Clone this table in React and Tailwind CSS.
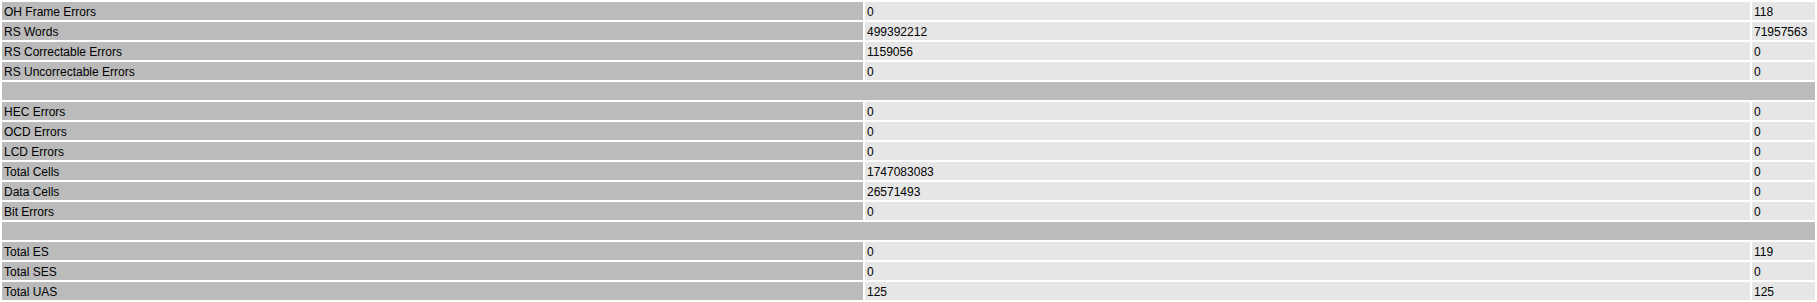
const ROWS = [
  ['OH Frame Errors', '0', '118'],
  ['RS Words', '499392212', '71957563'],
  ['RS Correctable Errors', '1159056', '0'],
  ['RS Uncorrectable Errors', '0', '0'],
  null,
  ['HEC Errors', '0', '0'],
  ['OCD Errors', '0', '0'],
  ['LCD Errors', '0', '0'],
  ['Total Cells', '1747083083', '0'],
  ['Data Cells', '26571493', '0'],
  ['Bit Errors', '0', '0'],
  null,
  ['Total ES', '0', '119'],
  ['Total SES', '0', '0'],
  ['Total UAS', '125', '125'],
]

const cell = 'h-[18px] px-[2px] pt-[3px] pb-[1px] align-top whitespace-nowrap overflow-hidden'

export default function App() {
  return (
    <div className="bg-white font-['Liberation_Sans',Arial,sans-serif] text-[12px] leading-[14px] text-black">
      <table className="w-full table-fixed border-separate border-spacing-[2px]">
        <colgroup>
          <col className="w-[861px]" />
          <col className="w-[885px]" />
          <col />
        </colgroup>
        <tbody>
          {ROWS.map((r, i) =>
            r ? (
              <tr key={i}>
                <td className={`${cell} bg-[#bbbbbb]`}>{r[0]}</td>
                <td className={`${cell} bg-[#e6e6e6]`}>{r[1]}</td>
                <td className={`${cell} bg-[#e6e6e6]`}>{r[2]}</td>
              </tr>
            ) : (
              <tr key={i}>
                <td colSpan="3" className={`${cell} bg-[#bbbbbb]`}></td>
              </tr>
            )
          )}
        </tbody>
      </table>
    </div>
  )
}
